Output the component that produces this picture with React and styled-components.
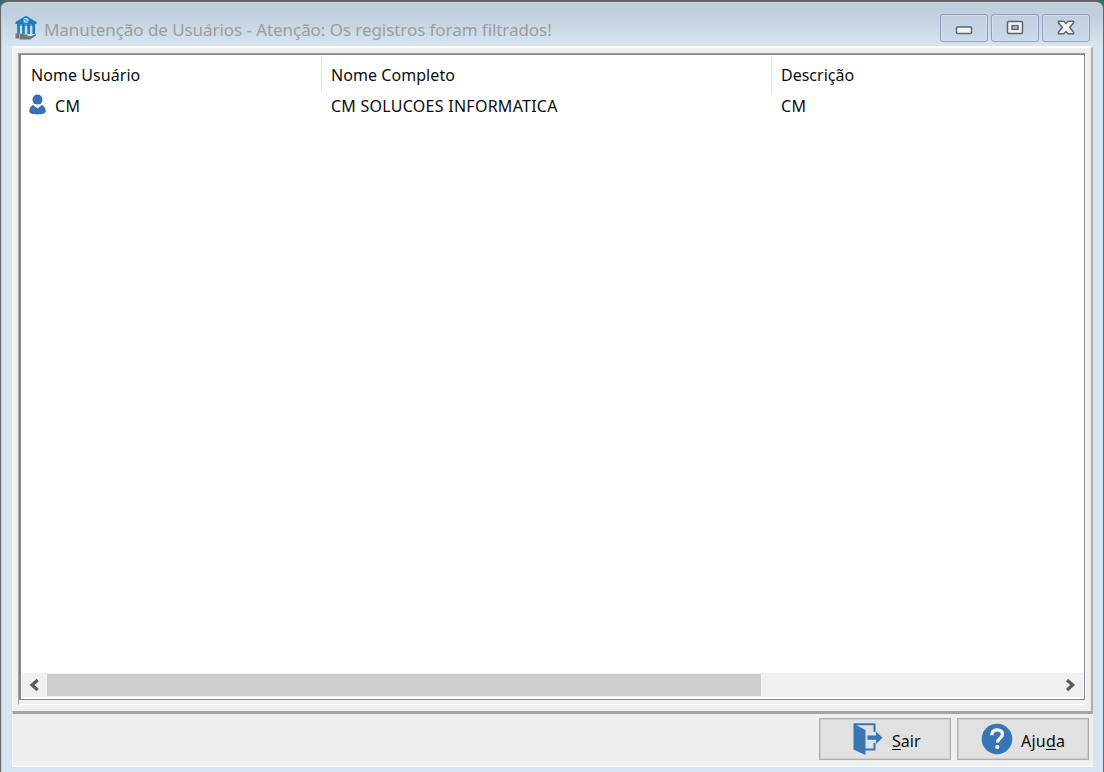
import React from "react";
import styled, { createGlobalStyle } from "styled-components";

const GlobalStyle = createGlobalStyle`
  * { box-sizing: border-box; }
  html, body { margin: 0; padding: 0; background: #2f6f70; overflow: hidden; }
  body { font-family: "Noto Sans", "Open Sans", sans-serif; font-size: 16px; color: #0c0c0c; }
`;

const Window = styled.div`
  width: 1104px;
  height: 772px;
  display: flex;
  flex-direction: column;
  padding: 0 10px;
  border: 1px solid #66696e;
  border-top: 2px solid #626267;
  border-bottom: 0;
  border-radius: 8px 8px 0 0;
  background: linear-gradient(#d5dde8 0, #c0cddc 2px, #c2cfde 14px, #d7e4f1 44px, #d7e4f1 100%);
  box-shadow: inset 1px 0 0 #bfcbd8;
`;

const TitleBar = styled.header`
  height: 44px;
  flex: none;
  display: flex;
  align-items: flex-start;
  padding: 12px 3px 0 4px;
`;

const AppIcon = styled.svg`
  width: 23px;
  height: 26px;
  margin-top: 1px;
  flex: none;
`;

const Title = styled.h1`
  flex: 1;
  margin: 3px 0 0 6px;
  font-size: 17px;
  line-height: 25px;
  font-weight: 400;
  color: #9b9da1;
  white-space: nowrap;
  letter-spacing: ${(p) => p.$spacing}px;
`;

const Controls = styled.div`
  display: flex;
  gap: 3px;
`;

const ControlButton = styled.button`
  width: 48px;
  height: 28px;
  padding: 0;
  display: flex;
  align-items: center;
  justify-content: center;
  border: 1px solid #8e9dba;
  border-radius: 3px;
  background: linear-gradient(#c0cede, #cbd9e8);
  box-shadow: inset 0 0 0 1px #d3dfec;
`;

const Frame = styled.main`
  width: 1081px;
  height: 665px;
  margin-left: 1px;
  flex: none;
  padding: 5px 5px 4px 5px;
  border: 1px solid #fff;
  border-top-width: 2px;
  border-right: 2px solid #aeb0b1;
  border-bottom: 0;
  background: #efefef;
`;

const ListShell = styled.div`
  height: 652px;
  border-left: 1px solid #a5a5a5;
  border-top: 1px solid #9c9ea1;
  border-right: 1px solid #fff;
  border-bottom: 1px solid #fff;
  padding: 0 4px 5px 0;
`;

const List = styled.section`
  height: 646px;
  width: 1066px;
  display: flex;
  flex-direction: column;
  border: 1px solid #82878f;
  border-left-width: 2px;
  background: #fff;
`;

const Columns = styled.div`
  display: grid;
  grid-template-columns: 301px 450px 1fr;
  padding-top: 1px;
`;

const HeaderCell = styled.div`
  height: 37px;
  padding: 8px 0 0 ${(p) => (p.$first ? 10 : 9)}px;
  line-height: 22px;
  border-right: 1px solid ${(p) => (p.$last ? "transparent" : "#e4e4e4")};
  white-space: nowrap;
  letter-spacing: ${(p) => p.$spacing}px;
`;

const Cell = styled.div`
  display: flex;
  align-items: center;
  height: 26px;
  padding-left: ${(p) => (p.$icon ? 8 : 9)}px;
  white-space: nowrap;
  letter-spacing: ${(p) => p.$spacing}px;
`;

const UserIcon = styled.svg`
  width: 17px;
  height: 21px;
  margin: -4px 9px 0 0;
`;

const Blank = styled.div`
  flex: 1;
`;

const ScrollBar = styled.div`
  height: 24px;
  margin: 0 1px 2px 1px;
  display: flex;
  align-items: center;
  background: #f0f0f0;
`;

const ScrollArrow = styled.svg`
  width: 25px;
  height: 22px;
  flex: none;
`;

const Track = styled.div`
  flex: 1;
  height: 22px;
`;

const Thumb = styled.div`
  width: 714px;
  height: 22px;
  background: #cdcdcd;
`;

const Footer = styled.footer`
  width: 1081px;
  height: 56px;
  margin-left: 1px;
  flex: none;
  display: flex;
  justify-content: flex-end;
  gap: 6px;
  padding: 4px 4px 0 0;
  border-top: 3px solid #a4a4a4;
  border-left: 1px solid #f8f8f8;
  border-bottom: 1px solid #fff;
  background: #efefef;
`;

const ActionButton = styled.button`
  width: 132px;
  height: 42px;
  display: flex;
  align-items: center;
  padding: 0 0 0 ${(p) => p.$left}px;
  border: 1px solid #adadad;
  background: #e1e1e1;
  box-shadow: inset 0 0 0 1px #cfcfcf;
  font: inherit;
  color: inherit;
`;

const Label = styled.span`
  margin: 3px 0 0 ${(p) => p.$gap}px;
  line-height: 22px;
  letter-spacing: ${(p) => p.$spacing}px;
  u { text-underline-offset: 2px; text-decoration-thickness: 1px; text-decoration-skip-ink: none; }
`;

const Glyph = styled.svg`
  width: ${(p) => p.$w}px;
  height: ${(p) => p.$h}px;
  flex: none;
`;

export default function App() {
  return (
    <>
      <GlobalStyle />
      <Window>
        <TitleBar>
          <AppIcon viewBox="0 0 23 26">
            <path d="M11 .7 21.500 7v2H.5V7Z" fill="#1681b8" />
            <circle cx="11" cy="5.400" r="2.600" fill="#a9d0e7" />
            <path d="m9.500 4 3 3" stroke="#1681b8" />
            <path d="M3.500 9v10M8.500 9v10M13.700 9v10M18.700 9v10" stroke="#1681b8" strokeWidth="2.600" />
            <path d="M2 10h18" stroke="#1681b8" strokeWidth="1.300" />
            <path d="M.5 18.500h3.500v5H.5ZM4.500 19c3-1 4 .6 7 .6 2 0 2 1.400 0 1.700l5-.4 4-1.900c1 0 .8 1.400-.2 2l-5 3.400H4.500Z" fill="#737578" />
          </AppIcon>
          <Title $spacing={-0.065}>Manutenção de Usuários - Atenção: Os registros foram filtrados!</Title>
          <Controls>
            <ControlButton aria-label="Minimizar">
              <Glyph $w={18} $h={18} viewBox="0 0 18 18">
                <rect x="1.500" y="8" width="15" height="6.500" rx="1" fill="#f4f4f4" stroke="#62656f" strokeWidth="1.500" />
              </Glyph>
            </ControlButton>
            <ControlButton aria-label="Maximizar">
              <Glyph $w={18} $h={18} viewBox="0 0 18 18">
                <rect x="1.500" y="2.500" width="15" height="12" rx="1" fill="#f1f1f1" stroke="#62656f" strokeWidth="1.500" />
                <rect x="6" y="6.700" width="6" height="3.600" fill="#b9c6d7" stroke="#62656f" strokeWidth="1.500" />
              </Glyph>
            </ControlButton>
            <ControlButton aria-label="Fechar">
              <Glyph $w={18} $h={18} viewBox="0 0 18 18">
                <path d="M1.400 2.200h5.400L9 4.600l2.200-2.400h5.400v1.600l-3.900 4.700 3.900 4.700v1.600h-5.400L9 12.400l-2.200 2.400H1.400v-1.600l3.900-4.700-3.900-4.700Z" fill="#f1f1f1" stroke="#62656f" strokeWidth="1.500" strokeLinejoin="round" />
              </Glyph>
            </ControlButton>
          </Controls>
        </TitleBar>
        <Frame>
          <ListShell>
            <List>
              <Columns>
                <HeaderCell $first $spacing={0.06}>Nome Usuário</HeaderCell>
                <HeaderCell $spacing={0.06}>Nome Completo</HeaderCell>
                <HeaderCell $spacing={0} $last>Descrição</HeaderCell>
                <Cell $icon $spacing={0.3}>
                  <UserIcon viewBox="0 0 17 21">
                    <circle cx="8.500" cy="5.600" r="5" fill="#3672b4" />
                    <path d="M4.200 11 8.500 14.600 12.800 11C15.500 12 16.700 14.500 16.700 17.500 16.700 19.600 13 20.400 8.500 20.400S.3 19.600.3 17.500C.3 14.500 1.500 12 4.200 11Z" fill="#3672b4" />
                  </UserIcon>
                  CM
                </Cell>
                <Cell $spacing={0.26}>CM SOLUCOES INFORMATICA</Cell>
                <Cell $spacing={0.3}>CM</Cell>
              </Columns>
              <Blank />
              <ScrollBar>
                <ScrollArrow viewBox="0 0 25 22">
                  <path d="m15.700 6-5.700 5 5.700 5" fill="none" stroke="#5b5b5b" strokeWidth="3.200" />
                </ScrollArrow>
                <Track><Thumb /></Track>
                <ScrollArrow viewBox="0 0 25 22">
                  <path d="m9 6 5.700 5-5.700 5" fill="none" stroke="#5b5b5b" strokeWidth="3.200" />
                </ScrollArrow>
              </ScrollBar>
            </List>
          </ListShell>
        </Frame>
        <Footer>
          <ActionButton $left={32}>
            <Glyph $w={32} $h={34} viewBox="0 0 32 34">
              <path d="M1.500 1.500 13.500 8v25L1.500 27.500Z" fill="#3775b5" />
              <path d="M2 2.300h20.500V10M22.500 21v6.500H13" fill="none" stroke="#3775b5" strokeWidth="2" />
              <path d="M15.500 13.600H24V9.500l6.500 6.200-6.500 6.200v-4.100h-8.500Z" fill="#3775b5" />
            </Glyph>
            <Label $gap={8} $spacing={0.05}><u>S</u>air</Label>
          </ActionButton>
          <ActionButton $left={23}>
            <Glyph $w={32} $h={32} viewBox="0 0 32 32">
              <circle cx="16" cy="16" r="15.300" fill="#3775b5" />
              <path d="M10.800 12.300c0-3.800 2.300-5.500 5.400-5.500 3.200 0 5.300 1.800 5.300 4.500 0 3.900-5.100 4-5.100 8.200" fill="none" stroke="#fff" strokeWidth="3.300" />
              <circle cx="16.300" cy="24" r="2.100" fill="#fff" />
            </Glyph>
            <Label $gap={8} $spacing={0.25}>Aju<u>d</u>a</Label>
          </ActionButton>
        </Footer>
      </Window>
    </>
  );
}
